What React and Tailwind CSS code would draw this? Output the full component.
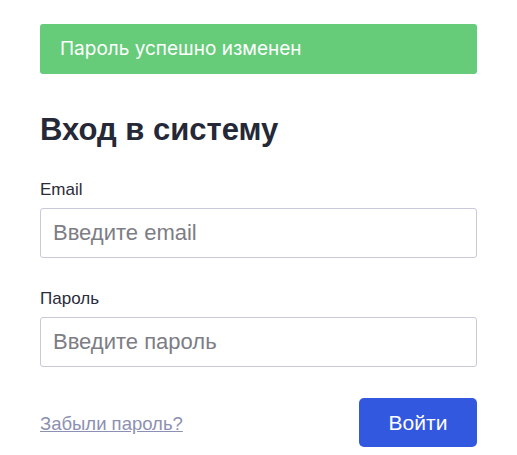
export default function App() {
  return (
    <div className="min-h-screen bg-white px-10 pt-6 font-['Liberation_Sans',Arial,sans-serif]">
      {/* success alert */}
      <div className="h-[50px] rounded-[3px] bg-[#66cc79] pl-5 flex items-center text-white text-[19px] font-['Inter',sans-serif]">
        Пароль успешно изменен
      </div>

      <h1 className="mt-[38px] text-[31px] leading-[36px] font-bold text-[#252836]">Вход в систему</h1>

      <div className="mt-[32px]">
        <label className="block text-[17px] leading-[20px] text-[#2b2b3a]">Email</label>
        <input
          type="email"
          placeholder="Введите email"
          className="mt-[8px] block w-full h-[50px] rounded-[3px] border border-[#c9c9dc] px-[12px] text-[22px] placeholder:text-[#7d7d85] outline-none"
        />
      </div>

      <div className="mt-[31px]">
        <label className="block text-[17px] leading-[20px] text-[#2b2b3a]">Пароль</label>
        <input
          type="password"
          placeholder="Введите пароль"
          className="mt-[8px] block w-full h-[50px] rounded-[3px] border border-[#c9c9dc] px-[12px] text-[22px] placeholder:text-[#7d7d85] outline-none"
        />
      </div>

      <div className="mt-[31px] flex items-center justify-between">
        <a href="#" className="mt-[2px] text-[18.5px] text-[#8c90b2] underline">Забыли пароль?</a>
        <button className="w-[118px] h-[49px] rounded-[5px] bg-[#3358e0] text-white text-[21px]">Войти</button>
      </div>
    </div>
  );
}
